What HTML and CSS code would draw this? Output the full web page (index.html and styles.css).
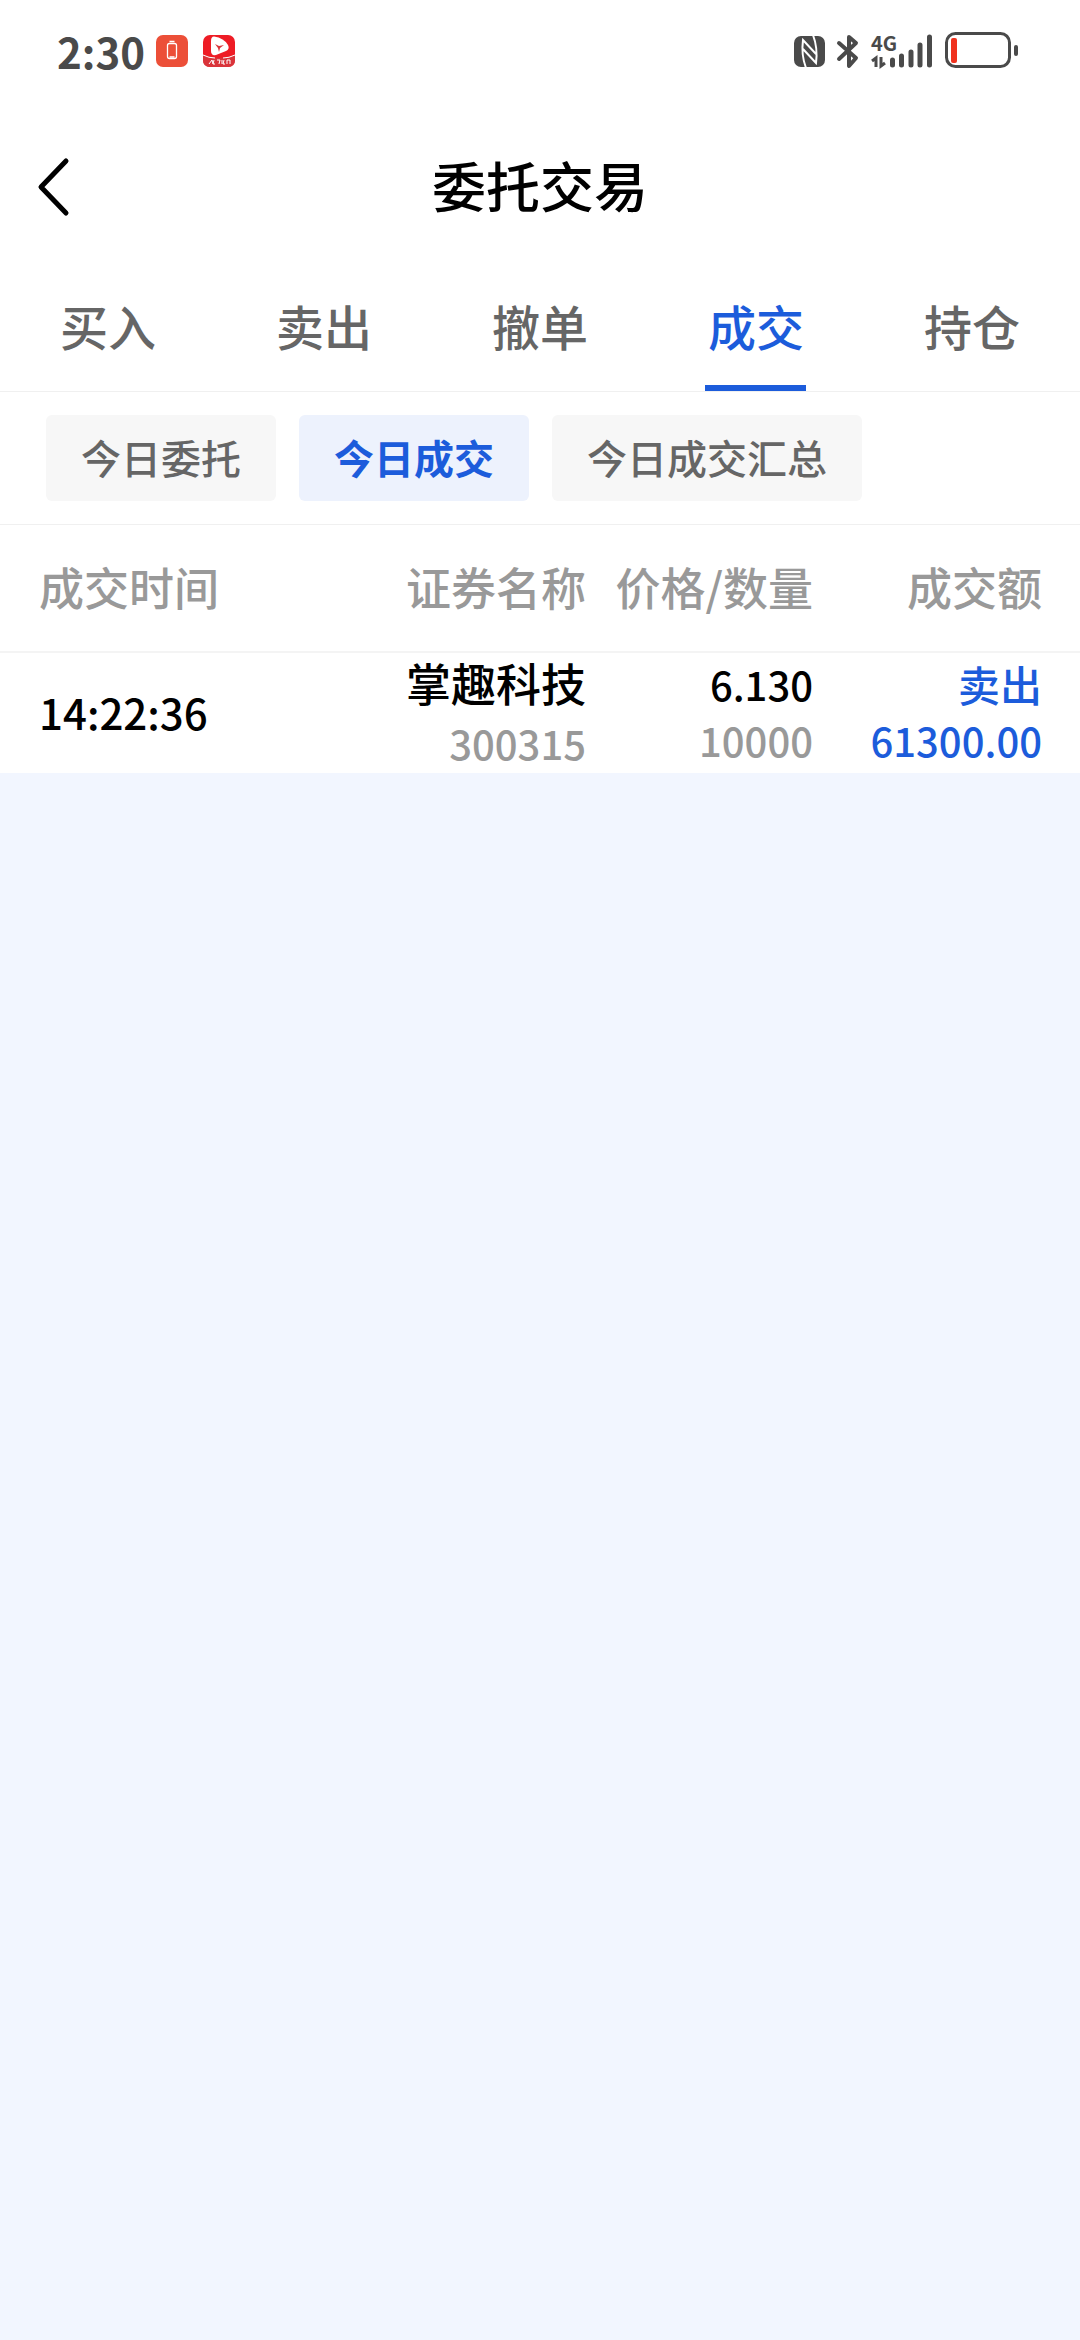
FILE: index.html
```html
<!DOCTYPE html>
<html lang="zh-CN">
<head>
    <meta charset="UTF-8">
    <meta name="viewport" content="width=device-width, initial-scale=1.0">
    <title>委托交易</title>
    <link rel="stylesheet" href="styles.css">
</head>
<body>

<!-- Status bar -->
<div class="status-bar">
    <div class="status-left">
        <span class="clock">2:30</span>
        <svg class="app-icon" width="32" height="32" viewBox="0 0 32 32" aria-hidden="true">
            <rect width="32" height="32" rx="7" fill="#ec4f38"/>
            <rect x="11.500" y="8.500" width="9" height="15" rx="2" fill="none" stroke="#fff" stroke-width="1.300"/>
            <path d="M13.500 6.500h5M13.500 22h5" stroke="#fff" stroke-width="1.300"/>
        </svg>
        <svg class="app-icon" width="32" height="32" viewBox="0 0 32 32" aria-hidden="true">
            <rect width="32" height="32" rx="7" fill="#ee1c25"/>
            <path d="M0 20q16 6 32 0v5q0 7-7 7H7q-7 0-7-7z" fill="#d9343a"/>
            <path d="M0 20q6 3 12 3M20 23q6 0 12-3" fill="none" stroke="#fff" stroke-width="1"/>
            <path d="M11 1.500Q8 1.500 8 6v10q0 5 5 4l10-4q4-2 2-6Q21 3 11 1.500z" fill="#fff"/>
            <path d="M12 9l4 2 5-1-4 3-1 4-1-4z" fill="#d9343a"/>
            <path d="M6 29l3-4 1 4M11 25l-1 4h2M14 25h3l-1 4M19 25v4M21 25l-1 4h2M24 25h3v4M24 25v4" fill="none" stroke="#fff" stroke-width="1"/>
        </svg>
    </div>
    <svg class="status-right" width="226" height="38" viewBox="793 32 226 38" aria-hidden="true">
        <!-- nfc -->
        <rect x="794" y="36" width="31" height="31" rx="7"/>
        <path d="M806 68q-5-13-3-28l13 14M813 35q5 13 3 28l-13-14" class="nfc-gap"/>
        <!-- bluetooth -->
        <path d="M839 43l17 15-7 8V37l7 6-17 16" class="line"/>
        <!-- network -->
        <text x="871" y="51" class="net">4G</text>
        <path d="M872 61l4-3v9M881 57v9l4-3" class="arrows"/>
        <path d="M892.500 60v5M901.500 56v9M911 52v13M920 45v20M929.500 37v28" class="bars"/>
        <!-- battery -->
        <rect x="946.500" y="33.500" width="63" height="33" rx="9" class="battery"/>
        <rect x="951" y="38" width="6" height="25" rx="2" class="battery-level"/>
        <rect x="1014" y="45" width="4" height="11" rx="2"/>
    </svg>
</div>

<header class="title-bar">
    <button class="back" type="button" aria-label="返回">
        <svg width="34" height="60" viewBox="0 0 34 60">
            <path d="M30 4L5 30l25 26" fill="none" stroke="#000" stroke-width="5" stroke-linecap="round" stroke-linejoin="round"/>
        </svg>
    </button>
    <h1>委托交易</h1>
</header>

<nav class="tabs">
    <a href="#buy">买入</a>
    <a href="#sell">卖出</a>
    <a href="#cancel">撤单</a>
    <a href="#deals" class="active" aria-current="page">成交</a>
    <a href="#positions">持仓</a>
</nav>

<main>
    <div class="filters">
        <button type="button">今日委托</button>
        <button type="button" class="active">今日成交</button>
        <button type="button">今日成交汇总</button>
    </div>

    <table class="deals">
        <thead>
            <tr>
                <th class="col-time">成交时间</th>
                <th class="col-name">证券名称</th>
                <th class="col-price">价格/数量</th>
                <th class="col-amount">成交额</th>
            </tr>
        </thead>
        <tbody>
            <tr>
                <td class="time">14:22:36</td>
                <td>
                    <div class="name">掌趣科技</div>
                    <div class="code">300315</div>
                </td>
                <td class="price">
                    <div>6.130</div>
                    <div class="muted">10000</div>
                </td>
                <td class="sell">
                    <div class="side">卖出</div>
                    <div>61300.00</div>
                </td>
            </tr>
        </tbody>
    </table>
</main>

</body>
</html>
```
FILE: styles.css
```css
* {
    box-sizing: border-box;
}
body {
    margin: 0;
    min-height: 100vh;
    background-color: #f2f6ff;
    color: #000;
    font-family: "Noto Sans CJK SC", sans-serif;
    font-weight: 500;
}
button {
    border: none;
    padding: 0;
    font: inherit;
    cursor: pointer;
}

/* Status bar */
.status-bar {
    display: flex;
    justify-content: space-between;
    align-items: center;
    height: 102px;
    padding: 0 61px 0 57px;
    background-color: #fff;
}
.status-left {
    display: flex;
    align-items: center;
}
.clock {
    margin-right: 11px;
    font-size: 42px;
    font-weight: 700;
    line-height: 60px;
    color: #4a4a4a;
}
.app-icon {
    margin-right: 15px;
}
.status-right {
    overflow: visible;
    fill: #4a4a4a;
}
.status-right .nfc-gap {
    fill: none;
    stroke: #fff;
    stroke-width: 2;
}
.status-right .line {
    fill: none;
    stroke: #4a4a4a;
    stroke-width: 4;
    stroke-linecap: round;
    stroke-linejoin: round;
}
.status-right .net {
    font-size: 20px;
    font-weight: 700;
}
.status-right .arrows {
    fill: none;
    stroke: #4a4a4a;
    stroke-width: 3;
}
.status-right .bars {
    fill: none;
    stroke: #4a4a4a;
    stroke-width: 5;
    stroke-linecap: round;
}
.status-right .battery {
    fill: none;
    stroke: #4a4a4a;
    stroke-width: 3;
}
.status-right .battery-level {
    fill: #f0321e;
}

/* Title */
.title-bar {
    display: grid;
    grid-template-columns: 1fr auto 1fr;
    align-items: center;
    height: 162px;
    padding: 8px 36px 0;
    background-color: #fff;
}
.title-bar h1 {
    margin: 0;
    padding-bottom: 4px;
    font-size: 54px;
    font-weight: 500;
    line-height: 80px;
}
.back {
    justify-self: start;
    background: none;
}
.back svg {
    display: block;
}

/* Tabs */
.tabs {
    display: flex;
    background-color: #fff;
    border-bottom: 1px solid #f0f0f0;
}
.tabs a {
    position: relative;
    flex: 1;
    padding-bottom: 4px;
    text-align: center;
    font-size: 48px;
    line-height: 123px;
    color: #666;
    text-decoration: none;
}
.tabs a.active {
    color: #1c5cdb;
}
.tabs a.active::after {
    content: "";
    position: absolute;
    left: 50%;
    bottom: 0;
    width: 101px;
    height: 6px;
    margin-left: -51px;
    background-color: #1c5cdb;
}

/* Filter buttons */
.filters {
    display: flex;
    gap: 23px;
    padding: 23px 46px;
    background-color: #fff;
    border-bottom: 1px solid #f0f0f0;
}
.filters button {
    padding: 0 35px 2px;
    border-radius: 6px;
    background-color: #f7f7f7;
    color: #666;
    font-size: 40px;
    line-height: 84px;
}
.filters button.active {
    background-color: #edf2fd;
    color: #1c5cdb;
    font-weight: 700;
}

/* Deals table */
.deals {
    width: 100%;
    table-layout: fixed;
    border-collapse: separate;
    border-spacing: 0;
    background-color: #fff;
    font-size: 40px;
    line-height: 56px;
    text-align: right;
}
.deals th,
.deals td {
    padding: 0;
}
.deals th {
    padding-bottom: 2px;
    border-bottom: 2px solid #f4f4f4;
    color: #999;
    font-size: 45px;
    font-weight: 500;
    line-height: 124px;
}
.deals th:first-child,
.deals td:first-child {
    padding-left: 39px;
    text-align: left;
}
.deals th:last-child,
.deals td:last-child {
    padding-right: 38px;
}
.deals .time,
.deals .price,
.deals .sell {
    padding-bottom: 3px;
}
.col-name {
    width: 240px;
}
.col-price {
    width: 227px;
}
.col-amount {
    width: 267px;
}
.deals .name {
    font-size: 45px;
    line-height: 60px;
}
.deals .code {
    line-height: 60px;
    color: #999;
}
.deals .muted {
    color: #999;
}
.deals .sell {
    color: #1c5cdb;
}
.deals .time,
.deals .side {
    font-size: 42px;
}
```
